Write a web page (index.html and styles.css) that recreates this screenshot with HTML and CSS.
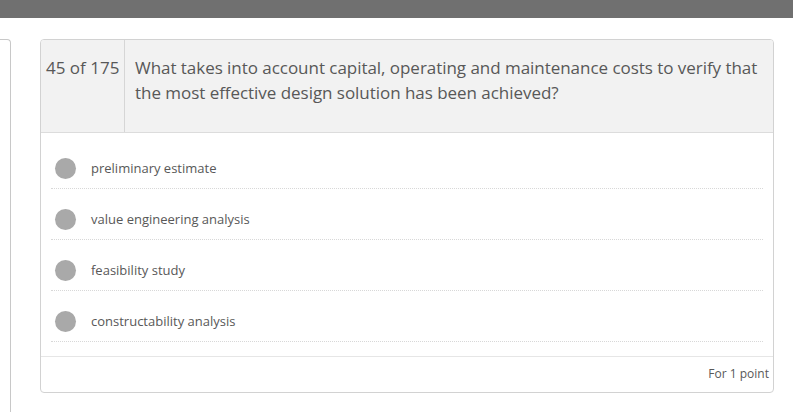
FILE: index.html
```html
<!DOCTYPE html>
<html>
<head>
<meta charset="utf-8">
<link rel="stylesheet" href="styles.css">
</head>
<body>
<div class="topbar"></div>
<div class="main">
  <div class="sidepanel"></div>
  <div class="card">
    <div class="card-head">
      <div class="qnum">45 of 175</div>
      <div class="qtext">What takes into account capital, operating and maintenance costs to verify that the most effective design solution has been achieved?</div>
    </div>
    <ul class="options">
      <li class="option"><span class="radio"></span><span class="label">preliminary estimate</span></li>
      <li class="option"><span class="radio"></span><span class="label">value engineering analysis</span></li>
      <li class="option"><span class="radio"></span><span class="label">feasibility study</span></li>
      <li class="option"><span class="radio"></span><span class="label">constructability analysis</span></li>
    </ul>
    <div class="card-foot">For 1 point</div>
  </div>
</div>
</body>
</html>
```
FILE: styles.css
```css
* { box-sizing: border-box; }
html, body { margin: 0; padding: 0; background: #fff; overflow: hidden; }
body { font-family: "Open Sans", "Liberation Sans", sans-serif; color: #585858; width: 803px; height: 412px; }

.topbar { height: 18px; width: 793px; background: #707070; }

.main { display: flex; align-items: flex-start; padding-top: 21px; }

.sidepanel {
  width: 20px;
  margin-left: -9px;
  height: 373px;
  border: 1px solid #c8c8c8;
  border-left: none;
  border-bottom: none;
  border-top-right-radius: 4px;
}

.card {
  margin-left: 29px;
  width: 734px;
  border: 1px solid #d2d2d2;
  border-radius: 4px;
  overflow: hidden;
}

.card-head {
  display: flex;
  background: #f2f2f2;
  border-bottom: 1px solid #dcdcdc;
  font-size: 17px;
  line-height: 25px;
}
.qnum {
  width: 84px;
  flex: none;
  padding: 15px 0 27px 5px;
  border-right: 1px solid #d6d6d6;
  white-space: nowrap;
}
.qtext { padding: 15px 8px 27px 10px; letter-spacing: -0.04px; }

.options { list-style: none; margin: 0; padding: 5px 10px 14px; border-bottom: 1px solid #e6e6e6; }
.option {
  display: flex;
  align-items: center;
  padding: 20px 0 9px 4px;
  border-bottom: 1px dotted #d8d8d8;
  font-size: 13px;
  line-height: 21px;
}
.radio { width: 21px; height: 21px; border-radius: 50%; background: #a9a9a9; flex: none; }
.label { margin-left: 15px; }

.card-foot { text-align: right; font-size: 12px; line-height: 18px; padding: 8px 4px 9px; color: #585858; }
```
